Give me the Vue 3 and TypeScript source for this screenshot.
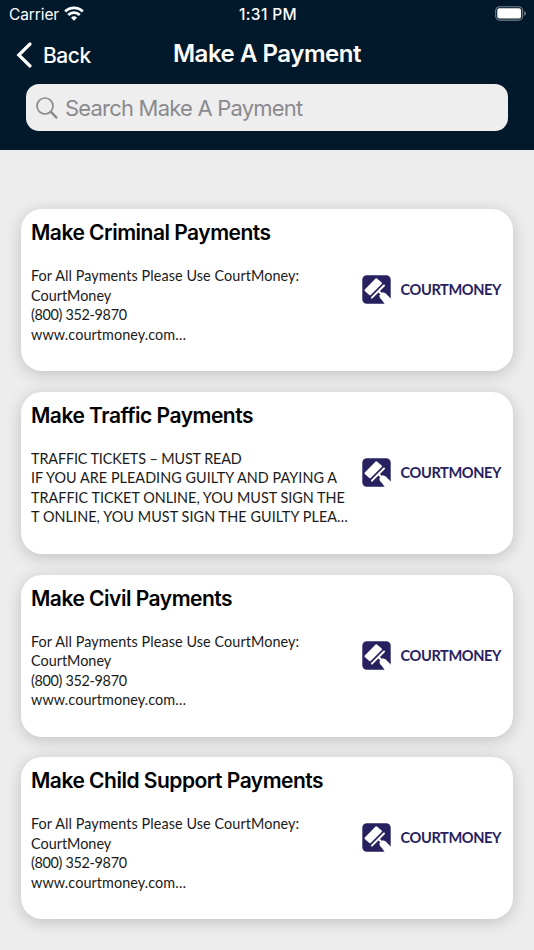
<script setup lang="ts">
interface PaymentCard {
  title: string
  kind: string
  lines: string[]
}

const general: string[] = [
  'For All Payments Please Use CourtMoney:',
  'CourtMoney',
  '(800) 352-9870',
  'www.courtmoney.com…',
]

const cards: PaymentCard[] = [
  { title: 'Make Criminal Payments', kind: 'general', lines: general },
  {
    title: 'Make Traffic Payments',
    kind: 'notice',
    lines: [
      'TRAFFIC TICKETS – MUST READ',
      'IF YOU ARE PLEADING GUILTY AND PAYING A',
      'TRAFFIC TICKET ONLINE, YOU MUST SIGN THE',
      'T ONLINE, YOU MUST SIGN THE GUILTY PLEA…',
    ],
  },
  { title: 'Make Civil Payments', kind: 'general', lines: general },
  { title: 'Make Child Support Payments', kind: 'general', lines: general },
]
</script>

<template>
  <div class="screen">
    <header class="header">
      <div class="status">
        <div class="carrier">
          <span>Carrier</span>
          <svg class="wifi" viewBox="0 0 20 15" width="20" height="15">
            <path d="M1.2 5.5a12.500 12.500 0 0 1 17.600 0M4.300 8.900a8.100 8.100 0 0 1 11.400 0" fill="none" stroke="#fff" stroke-width="2.800" />
            <path d="M10 14.700 7 11.700a4.300 4.300 0 0 1 6 0z" fill="#fff" />
          </svg>
        </div>
        <span class="time">1:31 PM</span>
        <svg class="battery" viewBox="0 0 32 15" width="32" height="15">
          <rect x="0.7" y="0.7" width="27" height="13.4" rx="4" fill="none" stroke="#76818b" stroke-width="1.1" />
          <rect x="2.3" y="2.3" width="23.8" height="10.2" rx="2" fill="#fff" />
          <path d="M29.300 5v5c1-.4 1.600-1.400 1.600-2.500s-.6-2.100-1.600-2.500z" fill="#76818b" />
        </svg>
      </div>
      <nav class="nav">
        <button class="back" type="button">
          <svg viewBox="0 0 16 26" width="16" height="26">
            <path d="M14 2 2.800 13 14 24" fill="none" stroke="#fff" stroke-width="3.2" stroke-linecap="round" />
          </svg>
          <span>Back</span>
        </button>
        <h1 class="title">Make A Payment</h1>
        <span></span>
      </nav>
      <div class="search">
        <svg viewBox="0 0 22 22" width="22" height="22">
          <circle cx="9" cy="9" r="8" fill="none" stroke="#8a8a8e" stroke-width="1.7" />
          <path d="M14.900 14.900 20.300 20.300" stroke="#8a8a8e" stroke-width="2.5" stroke-linecap="round" />
        </svg>
        <span>Search Make A Payment</span>
      </div>
    </header>

    <main class="list">
      <article v-for="card in cards" :key="card.title" class="card">
        <div class="copy">
          <h2 class="heading">{{ card.title }}</h2>
          <div class="details" :class="card.kind">
            <p v-for="line in card.lines" :key="line">{{ line }}</p>
          </div>
        </div>
        <div class="brand">
          <svg viewBox="0 0 29 29" width="29" height="29">
            <rect x="0.3" y="0.3" width="28.4" height="28.4" rx="4.5" fill="#27215f" />
            <path d="M3.500 15.200 14.300 4.200 19 8.300 8 19.300z" fill="#fff" stroke="#fff" stroke-width="2" stroke-linejoin="round" />
            <path d="M22 10.500 9.900 22.600M16.500 16l2.500 2.500" fill="none" stroke="#fff" stroke-width="2" stroke-linecap="round" />
            <path d="M17.300 20.200 20.700 17.200q3.300.3 4.800 3.100L29 23.800V29h-6.300l-3-4.300q-2.400-1.700-2.400-4.500z" fill="#fff" />
          </svg>
          <span>COURTMONEY</span>
        </div>
      </article>
    </main>
  </div>
</template>

<style>
body {
  margin: 0;
  background: #ededed;
}
</style>

<style scoped>
.screen {
  width: 534px;
  height: 950px;
  overflow: hidden;
  background: #ededed;
  font-family: Inter, "Liberation Sans", sans-serif;
}
.header {
  box-sizing: border-box;
  height: 150px;
  background: #02182b;
  color: #fff;
}
.status {
  display: grid;
  grid-template-columns: 1fr auto 1fr;
  align-items: center;
  height: 28px;
  padding: 0 7px 0 9px;
  font-size: 15.5px;
}
.carrier {
  display: flex;
  align-items: center;
  gap: 5px;
  letter-spacing: -0.1px;
}
.wifi {
  margin-top: -2px;
}
.time {
  font-weight: 500;
  letter-spacing: 0.35px;
}
.battery {
  justify-self: end;
  margin-top: -1px;
}
.nav {
  display: grid;
  grid-template-columns: 1fr auto 1fr;
  align-items: center;
  height: 52px;
  padding: 0 16px;
}
.back {
  display: flex;
  align-items: center;
  gap: 11px;
  padding: 2px 0 0;
  border: 0;
  background: none;
  color: #fff;
  font: 500 21px/26px Inter, sans-serif;
  letter-spacing: -0.45px;
}
.back svg {
  margin-top: -1px;
}
.back span {
  padding-top: 1px;
}
.title {
  margin: 0;
  font-size: 24px;
  font-weight: 600;
  line-height: 30px;
  letter-spacing: -0.45px;
}
.search {
  display: flex;
  align-items: center;
  gap: 7px;
  box-sizing: border-box;
  height: 47px;
  margin: 4px 26px 0;
  padding: 0 10px;
  border-radius: 13px;
  background: #eeeeef;
  color: #8a8a8e;
  font-size: 22px;
  letter-spacing: -0.8px;
}
.list {
  display: flex;
  flex-direction: column;
  gap: 20.8px;
  padding: 59px 21px 30px;
}
.card {
  display: flex;
  box-sizing: border-box;
  height: 162px;
  padding: 10px 12px 0 10px;
  border-radius: 21px;
  background: #fff;
  box-shadow: 0 3px 16px rgba(0, 0, 0, 0.19);
}
.copy {
  flex: 1;
  min-width: 0;
}
.heading {
  margin: 0;
  color: #000;
  font-size: 21px;
  font-weight: 600;
  line-height: 28px;
  letter-spacing: -0.5px;
  white-space: nowrap;
}
.details {
  margin-top: 19px;
  color: #1a1a1a;
  font: 14.4px/19.5px Lato, sans-serif;
  white-space: nowrap;
}
.details p {
  margin: 0;
}
.general p {
  letter-spacing: 0.08px;
}
.general p:nth-child(2) {
  letter-spacing: 0;
}
.general p:nth-child(3) {
  letter-spacing: -0.32px;
}
.notice p:first-child {
  letter-spacing: -0.12px;
}
.notice p:nth-child(2) {
  letter-spacing: 0.04px;
}
.notice p:last-child {
  letter-spacing: 0.08px;
}
.brand {
  display: flex;
  align-items: center;
  gap: 10px;
  height: 142px;
  color: #27215f;
  font: 700 14.6px/20px Lato, sans-serif;
  letter-spacing: -0.42px;
}
.brand svg {
  margin-top: -1px;
}
</style>
